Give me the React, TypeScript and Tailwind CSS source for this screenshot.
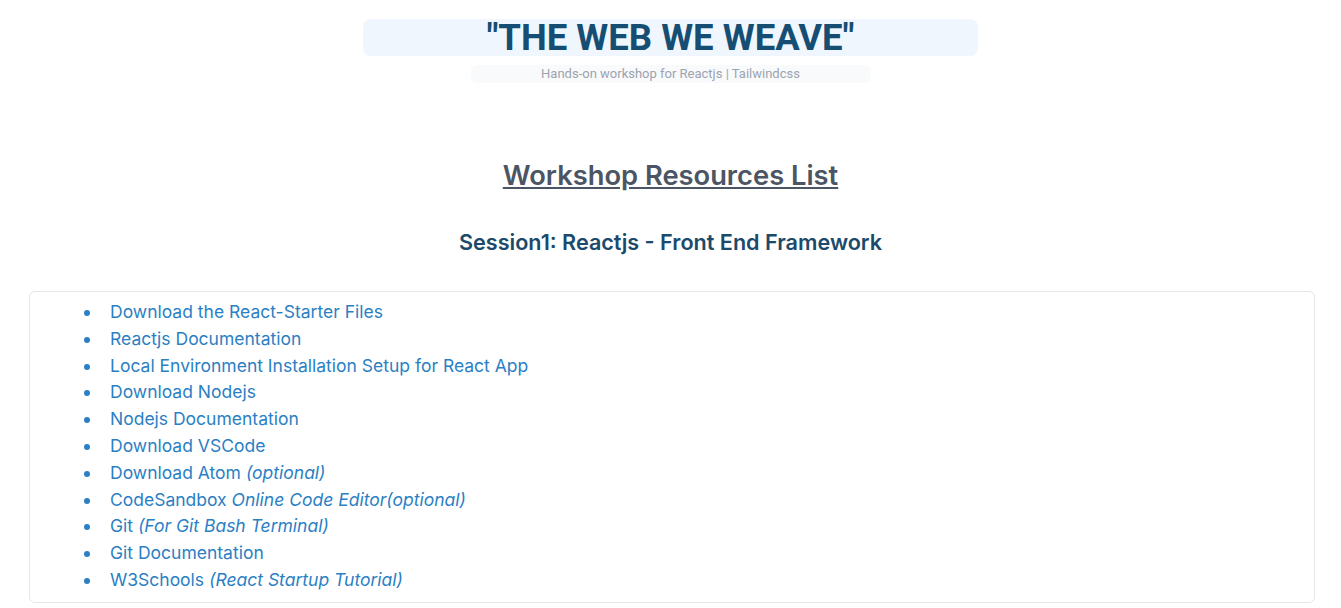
import React from "react";

const items: { main: string; extra?: string }[] = [
  { main: "Download the React-Starter Files" },
  { main: "Reactjs Documentation" },
  { main: "Local Environment Installation Setup for React App" },
  { main: "Download Nodejs" },
  { main: "Nodejs Documentation" },
  { main: "Download VSCode" },
  { main: "Download Atom", extra: " (optional)" },
  { main: "CodeSandbox", extra: " Online Code Editor(optional)" },
  { main: "Git", extra: " (For Git Bash Terminal)" },
  { main: "Git Documentation" },
  { main: "W3Schools", extra: " (React Startup Tutorial)" },
];

export default function App() {
  return (
    <div className="min-h-[608px] bg-white font-['Inter',sans-serif]">
      <header className="flex flex-col items-center pt-[19px]">
        <h1 className="w-[615px] h-[37px] rounded-lg bg-[#eff6fd] text-center text-[36.5px] leading-[37px] font-bold text-[#164e73] font-['Roboto',sans-serif]">
          "THE WEB WE WEAVE"
        </h1>
        <p className="mt-[9px] w-[400px] h-[18px] rounded-md bg-[#f8fafc] text-center text-[13px] leading-[18px] text-[#9ca3af] font-['Roboto',sans-serif]">
          Hands-on workshop for Reactjs | Tailwindcss
        </p>
      </header>
      <h2 className="mt-[76px] text-center text-[27.3px] leading-[34px] font-semibold text-[#4b5563] underline">
        Workshop Resources List
      </h2>
      <h3 className="mt-[35px] text-center text-[21.6px] leading-[28px] font-semibold text-[#1b4a6b]">
        Session1: Reactjs - Front End Framework
      </h3>
      <div className="mt-[35px] ml-[29px] mr-[26px] rounded-md border border-[#e5e7eb] pt-[7px] pb-2">
        <ul className="list-disc pl-[72px] text-[17.5px] leading-[26.8px] text-[#2b7fc4] marker:text-[#2b7fc4]">
          {items.map((it) => (
            <li key={it.main} className="pl-[8px]">
              {it.main}
              {it.extra && <i>{it.extra}</i>}
            </li>
          ))}
        </ul>
      </div>
    </div>
  );
}
